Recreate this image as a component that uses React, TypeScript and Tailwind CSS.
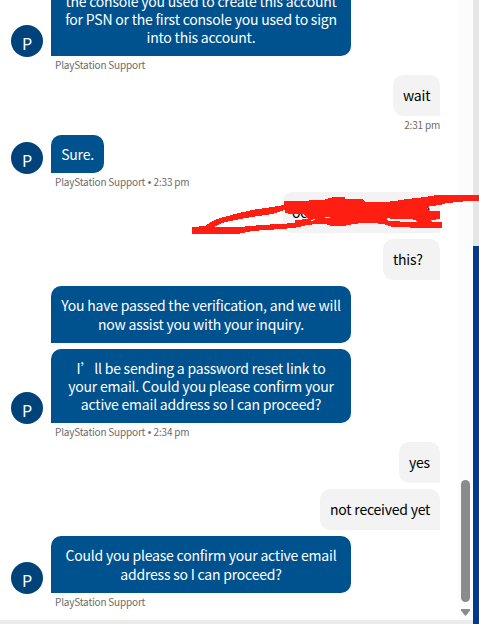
import type { ReactNode } from "react";

function Agent({ children, time, className = "" }: { children: ReactNode; time?: string; className?: string }) {
  return (
    <div className={className}>
      <div className="flex items-end">
        <div className="mr-2 -mb-px flex h-8 w-8 shrink-0 items-center justify-center rounded-full bg-[#00437a] pt-1 text-[16px] text-white">
          P
        </div>
        <div className="flex flex-col items-start gap-1.5">{children}</div>
      </div>
      <div className="ml-11 h-[18px] text-[10px] leading-[18px] tracking-[-0.19px] whitespace-pre text-[#6b6b6b]">
        PlayStation Support
        {time && (
          <>
            {" "}
            <span className="mx-[0.5px] font-['Liberation_Sans',sans-serif] leading-none">•</span> {time}
          </>
        )}
      </div>
    </div>
  );
}

function Bubble({ children, className = "" }: { children: ReactNode; className?: string }) {
  return (
    <div className={`rounded-[10px] rounded-bl-none bg-[#00528f] text-center whitespace-pre text-white ${className}`}>
      {children}
    </div>
  );
}

function Reply({ children, className = "" }: { children: ReactNode; className?: string }) {
  return (
    <div className={`mr-[18px] flex h-[41px] shrink-0 items-center self-end rounded-[10px] rounded-br-none bg-[#f3f3f3] px-2.5 pb-0.5 whitespace-nowrap text-black ${className}`}>
      {children}
    </div>
  );
}

export default function App() {
  return (
    <div className="relative flex h-[624px] w-[479px] overflow-hidden bg-white font-['Noto_Sans_CJK_SC',sans-serif] text-[14px] leading-[18px] tracking-[-0.21px]">
      <div className="flex w-[473px] flex-col">
        <div className="flex h-[620px]">
          {/* Conversation */}
          <main className="flex w-[458px] flex-col overflow-hidden pl-[11px]">
            <Agent className="-mt-[18px]">
              <Bubble className="h-[74px] w-[300px] pt-2.5">
                {"the console you used to create this account\nfor PSN or the first console you used to sign\ninto this account."}
              </Bubble>
            </Agent>
            <Reply className="mt-px w-[47px]">wait</Reply>
            <div className="mr-[18px] h-[19px] self-end text-[10px] leading-[18px] tracking-[-0.19px] text-[#6b6b6b]">2:31 pm</div>
            <Agent time="2:33 pm">
              <Bubble className="h-[38px] w-[53px] pt-2.5">Sure.</Bubble>
            </Agent>
            <Reply className="mt-px w-[158px] justify-between">
              <span>oc</span>
              <span>?</span>
            </Reply>
            <Reply className="mt-1.5 w-[57px]">this?</Reply>
            <Agent time="2:34 pm" className="mt-1.5">
              <Bubble className="h-[57px] w-[300px] pt-2.5 leading-[19px]">
                {"You have passed the verification, and we will\nnow assist you with your inquiry."}
              </Bubble>
              <Bubble className="h-[74px] w-[300px] pt-2.5">
                {"I’ll be sending a password reset link to\nyour email. Could you please confirm your\nactive email address so I can proceed?"}
              </Bubble>
            </Agent>
            <Reply className="mt-px w-[41px]">yes</Reply>
            <Reply className="mt-1.5 w-[120px]">not received yet</Reply>
            <Agent className="mt-1.5">
              <Bubble className="h-[57px] w-[300px] pt-2.5 leading-[19px]">
                {"Could you please confirm your active email\naddress so I can proceed?"}
              </Bubble>
            </Agent>
          </main>

          {/* Scrollbar */}
          <div className="flex w-[15px] flex-col items-center bg-[#fcfcfc] pt-[480px]">
            <div className="h-[122px] w-[9px] rounded-full bg-[#8b8b8b]" />
            <svg className="mt-[7px]" width="9" height="7" viewBox="0 0 9 7">
              <path d="M0.8 0h7.4q.8 0 .8.8v.6L5.3 6.3q-.8.9-1.6 0L0 1.4V.8Q0 0 .8 0Z" fill="#8b8b8b" />
            </svg>
          </div>
        </div>
        <div className="h-1 bg-[#ebebeb]" />
      </div>

      {/* Page behind the chat window */}
      <div className="flex w-1.5 flex-col">
        <div className="h-[246px] bg-[#e6e6e6]" />
        <div className="flex-1 bg-[#003b8e]" />
      </div>

      {/* Marker scribble */}
      <svg className="absolute top-0 left-0" width="479" height="624" viewBox="0 0 479 624" fill="#ff1f12" fillRule="evenodd" shapeRendering="crispEdges">
        <path
          d="M192 227L205 226L211 222L217 219L235 214L252 210L272 207L284 205V201H305L313 200H323L334 197H345V199H363L365 202H385L395 201L407 199L425 197L437 195H479V201H468L458 202L447 203L440 205L431 206L427 207L427 209L429 211H440V219L431 220L432 222H442V228H410V227H393L383 224L372 223H362L353 224L344 226H332L325 224H315L302 226L300 227L282 229L252 231L238 234H192Z
          M214 227H240L262 225L295 223V220L309 219L303 214L291 214L285 213V210L272 214L252 217L235 220L222 223Z
          M386 219L388 218L392 219H410L415 220L417 222H405L395 221H388Z
          M310 221L311 220L315 219V220Z M324 218L326 217H330V218Z"
        />
      </svg>
    </div>
  );
}
